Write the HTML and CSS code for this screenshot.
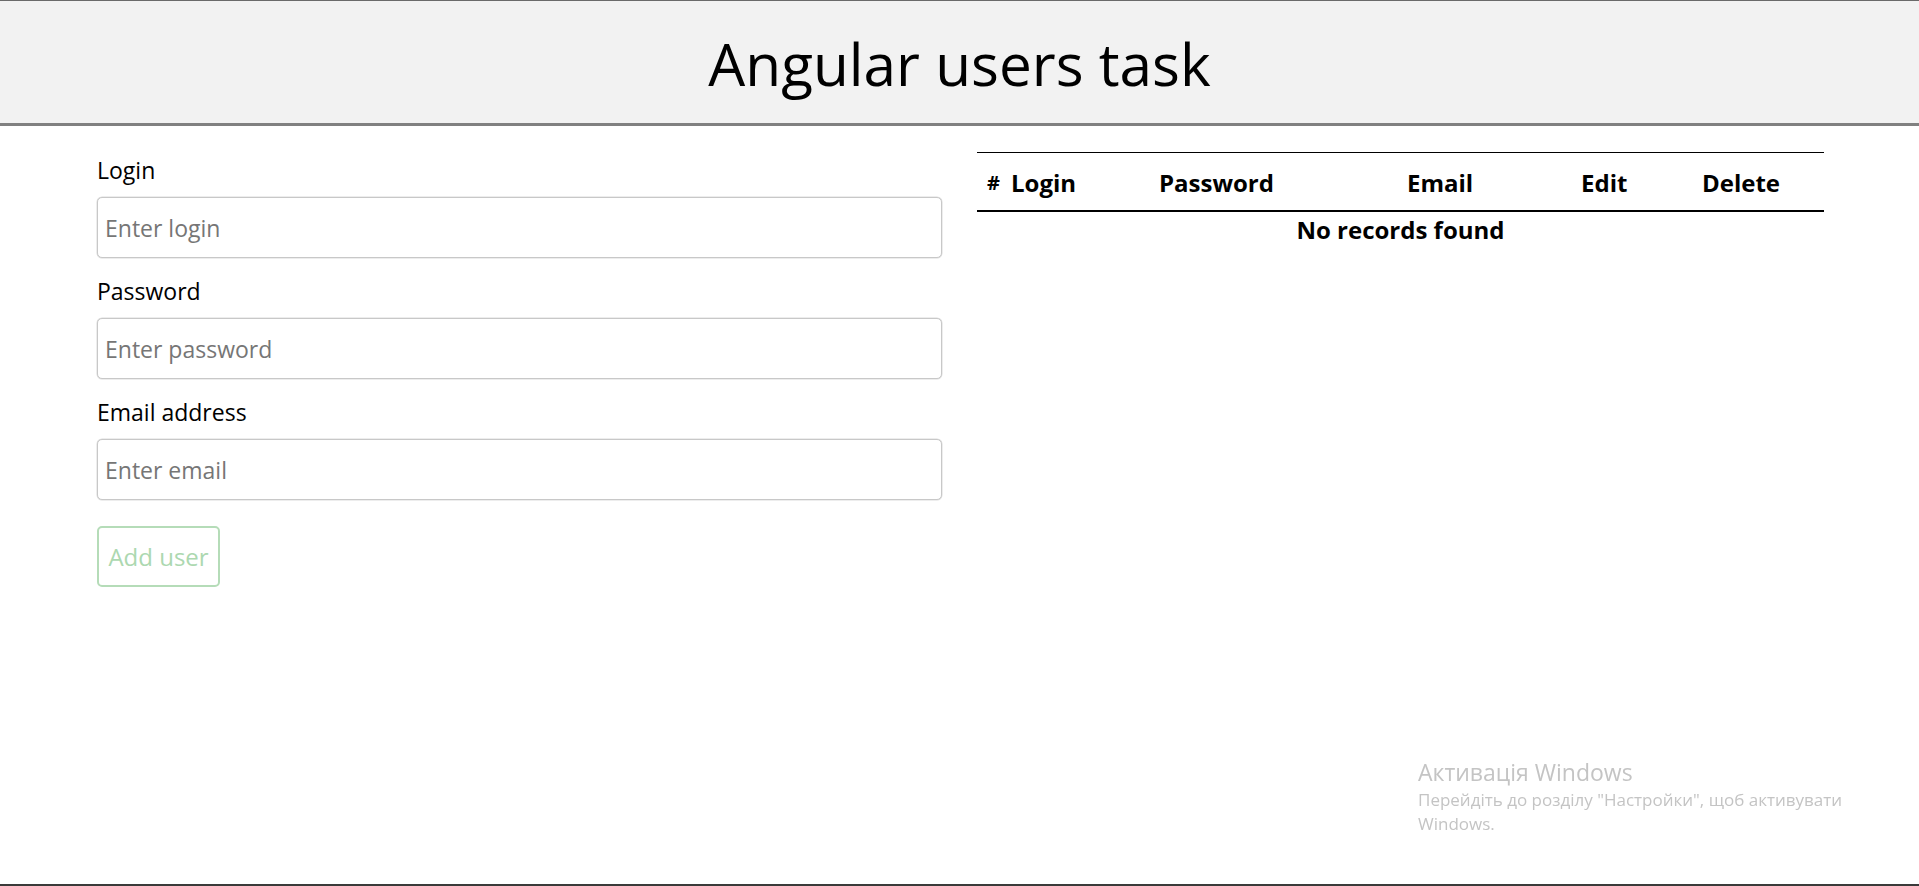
FILE: index.html
```html
<!DOCTYPE html>
<html lang="en">
<head>
<meta charset="utf-8">
<title>Angular users task</title>
<link rel="stylesheet" href="styles.css">
</head>
<body>
<header class="topbar">
  <h1 class="title">Angular users task</h1>
</header>
<main class="content">
  <form class="user-form">
    <div class="field">
      <label class="field-label" for="login">Login</label>
      <input class="field-input" id="login" type="text" placeholder="Enter login">
    </div>
    <div class="field">
      <label class="field-label" for="password">Password</label>
      <input class="field-input" id="password" type="password" placeholder="Enter password">
    </div>
    <div class="field">
      <label class="field-label" for="email">Email address</label>
      <input class="field-input" id="email" type="email" placeholder="Enter email">
    </div>
    <div class="actions">
      <button class="btn-add" type="button" disabled>Add user</button>
    </div>
  </form>
  <section class="users">
    <table class="users-table">
      <colgroup>
        <col class="c-num">
        <col class="c-login">
        <col class="c-pass">
        <col class="c-email">
        <col class="c-edit">
        <col class="c-del">
      </colgroup>
      <thead>
        <tr>
          <th class="th-num">#</th>
          <th>Login</th>
          <th>Password</th>
          <th>Email</th>
          <th>Edit</th>
          <th>Delete</th>
        </tr>
      </thead>
      <tbody>
        <tr>
          <td class="empty" colspan="6">No records found</td>
        </tr>
      </tbody>
    </table>
  </section>
</main>
<div class="activation">
  <div class="activation-title">Активація Windows</div>
  <div class="activation-text">Перейдіть до розділу "Настройки", щоб активувати Windows.</div>
</div>
</body>
</html>
```

FILE: styles.css
```css
* {
  box-sizing: border-box;
}

html, body {
  margin: 0;
  padding: 0;
}

body {
  font-family: "Open Sans", "Noto Sans", "Liberation Sans", sans-serif;
  color: #000;
  background: #fff;
  min-height: 100vh;
  border-top: 1px solid #6a6a6a;
  border-bottom: 2px solid #3a3a3a;
}

.topbar {
  background: #f2f2f2;
  border-bottom: 3px solid #808080;
  padding: 28px 0 26px;
  text-align: center;
}

.title {
  margin: 0;
  font-size: 58.5px;
  line-height: 68px;
  font-weight: 400;
}

.content {
  display: grid;
  grid-template-columns: 845px 847px;
  column-gap: 35px;
  padding: 29px 0 0 97px;
}

.field {
  margin-bottom: 18px;
}

.field-label {
  display: block;
  font-size: 23px;
  line-height: 30px;
  margin-bottom: 12px;
}

.field-input {
  display: block;
  width: 100%;
  height: 61px;
  border: 1px solid #c8c8c8;
  border-radius: 5px;
  padding: 0 7px;
  font-family: inherit;
  font-size: 23px;
  color: #333;
  background: #fff;
  box-shadow: 0 0 0 0.5px #dcdcdc;
}

.field-input::placeholder {
  color: #767676;
}

.actions {
  padding-top: 8px;
}

.btn-add {
  height: 61px;
  width: 123px;
  padding: 0;
  font-family: inherit;
  font-size: 24px;
  color: #acd8b0;
  background: #fff;
  border: 2px solid #b5dcb8;
  border-radius: 5px;
}

.users-table {
  width: 847px;
  table-layout: fixed;
  border-collapse: collapse;
  margin-top: -3px;
}

.c-num { width: 24px; }
.c-login { width: 148px; }
.c-pass { width: 248px; }
.c-email { width: 174px; }
.c-edit { width: 121px; }
.c-del { width: 132px; }

.users-table thead tr {
  border-top: 1px solid #000;
  border-bottom: 2px solid #000;
}

.users-table th {
  text-align: left;
  font-weight: 700;
  font-size: 24px;
  height: 58px;
  padding: 2px 0 0 10px;
  white-space: nowrap;
}

.users-table .th-num {
  padding-left: 10px;
  font-size: 20px;
}

.empty {
  text-align: center;
  font-weight: 700;
  font-size: 24px;
  line-height: 36px;
  padding: 0;
}

.activation {
  position: fixed;
  left: 1418px;
  top: 756px;
  color: #c4c4c4;
  font-family: "Open Sans", "Noto Sans", sans-serif;
}

.activation-title {
  font-size: 23px;
  line-height: 32px;
}

.activation-text {
  font-size: 17px;
  line-height: 24px;
  width: 440px;
}
```
